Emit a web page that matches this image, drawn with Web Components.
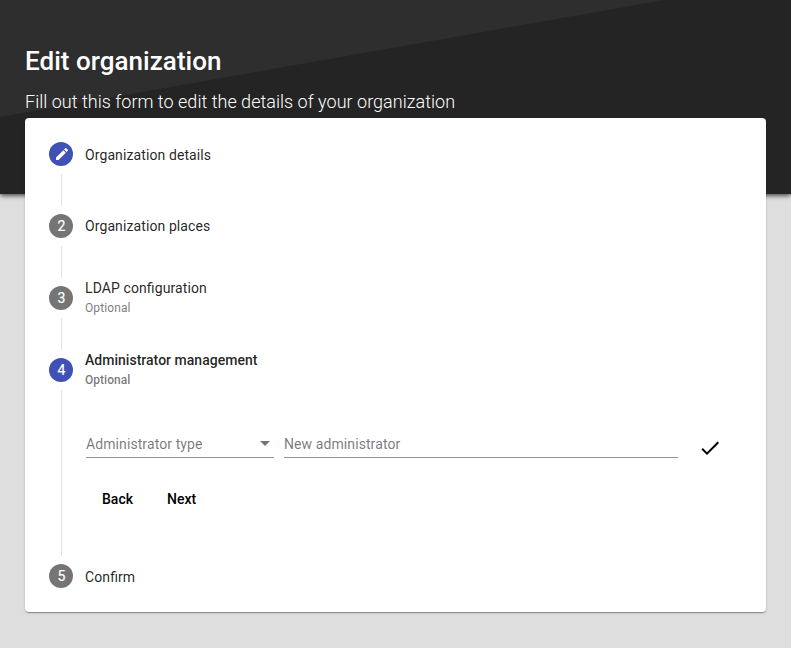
<!DOCTYPE html>
<html lang="en">
<head>
<meta charset="utf-8">
<title>Edit organization</title>
<style>
html, body { margin: 0; height: 100%; }
body { background: #dedede; font-family: Roboto, sans-serif; overflow: hidden; }
</style>
</head>
<body>
<org-page heading="Edit organization" subheading="Fill out this form to edit the details of your organization">
  <v-stepper>
    <v-step state="edit" label="Organization details"></v-step>
    <v-step number="2" label="Organization places"></v-step>
    <v-step number="3" label="LDAP configuration" optional></v-step>
    <v-step number="4" label="Administrator management" optional active><admin-form></admin-form></v-step>
    <v-step number="5" label="Confirm" last></v-step>
  </v-stepper>
</org-page>
<script>
class OrgPage extends HTMLElement {
  connectedCallback() {
    this.attachShadow({ mode: 'open' }).innerHTML = `
<style>
:host { display: grid; grid-template-rows: 194px 1fr; grid-template-columns: 25px 1fr 25px; height: 648px; }
.banner { grid-area: 1 / 1 / 2 / 4; position: relative; background: #242424; box-shadow: 0 3px 5px -1px rgba(0,0,0,.4), 0 2px 3px rgba(0,0,0,.3); }
.banner svg { display: block; width: 100%; height: 194px; }
main { grid-area: 1 / 2 / 3 / 3; position: relative; color: #fff; }
h1 { margin: 0; padding-top: 45px; font-size: 26px; line-height: 32px; font-weight: 500; letter-spacing: .03px; }
p { margin: 14px 0 6px; font-size: 18px; line-height: 21px; font-weight: 300; letter-spacing: .02px; }
</style>
<div class="banner"><svg viewBox="0 0 791 194" preserveAspectRatio="none"><path d="M0 0H665L0 117Z" fill="#2e2e2e"/></svg></div>
<main><h1></h1><p></p><slot></slot></main>`;
    this.shadowRoot.querySelector('h1').textContent = this.getAttribute('heading');
    this.shadowRoot.querySelector('p').textContent = this.getAttribute('subheading');
  }
}
class VStepper extends HTMLElement {
  constructor() {
    super();
    this.attachShadow({ mode: 'open' }).innerHTML = `
<style>
:host { display: block; height: 494px; border-radius: 4px; background: #fff; color: rgba(0,0,0,.87);
  box-shadow: 0 2px 1px -1px rgba(0,0,0,.2), 0 1px 1px 0 rgba(0,0,0,.14), 0 1px 3px 0 rgba(0,0,0,.12); }
</style><slot></slot>`;
  }
}
class VStep extends HTMLElement {
  connectedCallback() {
    const optional = this.hasAttribute('optional') ? '<div class="optional">Optional</div>' : '';
    const badge = this.getAttribute('state') === 'edit'
      ? '<svg width="16" height="16" viewBox="0 0 24 24"><path fill="#fff" d="M3 17.25V21h3.75L17.81 9.94l-3.75-3.75L3 17.25zM20.71 7.04a1 1 0 0 0 0-1.41l-2.34-2.34a1 1 0 0 0-1.41 0l-1.83 1.83 3.75 3.75 1.83-1.83z"/></svg>'
      : this.getAttribute('number');
    this.attachShadow({ mode: 'open' }).innerHTML = `
<style>
:host { display: grid; grid-template-columns: 24px 1fr; column-gap: 12px; padding: 0 24px; }
.rail { display: flex; flex-direction: column; align-items: center; padding-top: 24px; }
.badge { box-sizing: border-box; width: 24px; height: 24px; flex: none; border-radius: 50%; background: #757575; color: #fff; font-size: 14px; line-height: 24px; display: flex; align-items: center; justify-content: center; padding-left: 1px; -webkit-text-stroke: .2px #fff; }
:host([state=edit]) .badge { background: #3f51b5; }
:host([active]) .badge { background: #3f51b5; }
.line { width: 1px; flex: 1; margin: 8px 0 -16px 1px; background: #e1e1e1; }
:host([last]) .line { visibility: hidden; }
.label { box-sizing: border-box; height: 72px; display: flex; flex-direction: column; justify-content: center; font-size: 14px; line-height: 16px; letter-spacing: .1px; font-feature-settings: "liga"; padding-bottom: 2px; }
:host([state=edit]) .label, :host([last]) .label { padding-bottom: 0; }
.text { padding-top: 1px; }
.two .text { padding-top: 0; }
.optional { font-size: 12px; line-height: 14px; color: rgba(0,0,0,.54); margin-top: 5px; }
:host([active]) .label { font-weight: 500; letter-spacing: .02px; }
</style>
<div class="rail"><div class="badge">${badge}</div><div class="line"></div></div>
<div><div class="label ${optional ? 'two' : ''}"><div class="text"></div>${optional}</div><slot></slot></div>`;
    this.shadowRoot.querySelector('.text').textContent = this.getAttribute('label');
  }
}
class FormField extends HTMLElement {
  connectedCallback() {
    const arrow = this.hasAttribute('select') ? '<i></i>' : '';
    this.attachShadow({ mode: 'open' }).innerHTML = `
<style>
:host { box-sizing: border-box; display: flex; align-items: center; justify-content: space-between; height: 28px; padding: 0 4px 0 0; border-bottom: 1px solid #949494; color: rgba(0,0,0,.54); font-size: 14px; line-height: 16px; letter-spacing: .09px; }
span { padding-top: 1px; }
i { border: 5px solid transparent; border-top-color: #757575; border-bottom: 0; }
</style><span></span>${arrow}`;
    this.shadowRoot.querySelector('span').textContent = this.getAttribute('label');
  }
}
class AdminForm extends HTMLElement {
  constructor() {
    super();
    this.attachShadow({ mode: 'open' }).innerHTML = `
<style>
:host { box-sizing: border-box; display: block; height: 134px; padding: 24px 0 0 1px; }
.row { display: grid; grid-template-columns: 188px 394px 24px; column-gap: 10px; height: 28px; }
svg { margin: 6px 0 -2px 10px; }
.buttons { display: flex; gap: 2px; margin-top: 23px; }
button { border: 0; background: none; padding: 0 16px; font: 500 14px/36px Roboto, sans-serif; color: #000; }
</style>
<div class="row">
  <form-field select label="Administrator type"></form-field>
  <form-field label="New administrator"></form-field>
  <svg width="24" height="24" viewBox="0 0 24 24"><path d="M9 16.17 4.83 12l-1.42 1.41L9 19 21 7l-1.41-1.41z"/></svg>
</div>
<div class="buttons"><button>Back</button><button>Next</button></div>`;
  }
}
customElements.define('form-field', FormField);
customElements.define('admin-form', AdminForm);
customElements.define('v-step', VStep);
customElements.define('v-stepper', VStepper);
customElements.define('org-page', OrgPage);
</script>
</body>
</html>
